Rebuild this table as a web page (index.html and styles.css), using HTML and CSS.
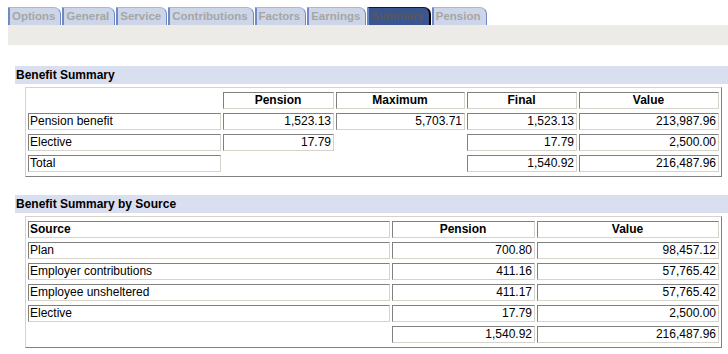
FILE: index.html
```html
<!DOCTYPE html>
<html>
<head>
<meta charset="utf-8">
<link rel="stylesheet" href="styles.css">
</head>
<body>
<div class="tabs">
  <div class="tab">Options</div>
  <div class="tab">General</div>
  <div class="tab">Service</div>
  <div class="tab">Contributions</div>
  <div class="tab">Factors</div>
  <div class="tab">Earnings</div>
  <div class="tab active">Summary</div>
  <div class="tab">Pension</div>
</div>
<div class="band"></div>

<div class="section-title first">Benefit Summary</div>
<table class="grid t1">
  <colgroup>
    <col class="c-label"><col class="c-pension"><col class="c-max"><col class="c-final"><col class="c-value">
  </colgroup>
  <tr>
    <td class="empty"></td>
    <th>Pension</th>
    <th>Maximum</th>
    <th>Final</th>
    <th>Value</th>
  </tr>
  <tr>
    <td>Pension benefit</td>
    <td class="num">1,523.13</td>
    <td class="num">5,703.71</td>
    <td class="num">1,523.13</td>
    <td class="num">213,987.96</td>
  </tr>
  <tr>
    <td>Elective</td>
    <td class="num">17.79</td>
    <td class="empty"></td>
    <td class="num">17.79</td>
    <td class="num">2,500.00</td>
  </tr>
  <tr>
    <td>Total</td>
    <td class="empty"></td>
    <td class="empty"></td>
    <td class="num">1,540.92</td>
    <td class="num">216,487.96</td>
  </tr>
</table>

<div class="section-title second">Benefit Summary by Source</div>
<table class="grid t2">
  <colgroup>
    <col class="c-source"><col class="c-spension"><col class="c-svalue">
  </colgroup>
  <tr>
    <th class="left">Source</th>
    <th>Pension</th>
    <th>Value</th>
  </tr>
  <tr>
    <td>Plan</td>
    <td class="num">700.80</td>
    <td class="num">98,457.12</td>
  </tr>
  <tr>
    <td>Employer contributions</td>
    <td class="num">411.16</td>
    <td class="num">57,765.42</td>
  </tr>
  <tr>
    <td>Employee unsheltered</td>
    <td class="num">411.17</td>
    <td class="num">57,765.42</td>
  </tr>
  <tr>
    <td>Elective</td>
    <td class="num">17.79</td>
    <td class="num">2,500.00</td>
  </tr>
  <tr>
    <td class="empty"></td>
    <td class="num">1,540.92</td>
    <td class="num">216,487.96</td>
  </tr>
</table>
</body>
</html>
```

FILE: styles.css
```css
html, body {
  background: #ffffff;
}
body {
  margin: 7px 0 0 8px;
  font-family: "Liberation Sans", Arial, sans-serif;
  font-size: 12px;
  color: #000;
}
.tabs {
  display: flex;
  gap: 1px;
  height: 18px;
  align-items: stretch;
}
.tab {
  box-sizing: border-box;
  height: 18px;
  padding: 0 5px 0 2px;
  background: #cdd5e8;
  border-top: 1px solid #a8b6dc;
  border-left: 2px solid #7088c3;
  border-right: 1px solid #7088c3;
  border-top-right-radius: 7px;
  color: #a6a6a6;
  font-weight: bold;
  font-size: 11.5px;
  line-height: 17px;
  white-space: nowrap;
}
.tab.active {
  background: #3b5590;
  border-top: 1px solid #1a1a1a;
  border-right: 2px solid #000;
  border-left: 2px solid #6c84bf;
  color: #585858;
}
.band {
  height: 20px;
  background: #ecebe7;
}
.section-title {
  margin-left: 7px;
  height: 18px;
  line-height: 18px;
  padding-left: 1px;
  background: #d9dfee;
  font-weight: bold;
  font-size: 12px;
}
.section-title.first {
  margin-top: 21px;
}
.section-title.second {
  margin-top: 18px;
}
.grid {
  margin: 3px 0 0 17px;
  table-layout: fixed;
  border-collapse: separate;
  border-spacing: 2px 4px;
  border-style: solid;
  border-width: 1px;
  border-color: #d6d3cb #808080 #808080 #d6d3cb;
  empty-cells: hide;
}
.t1 { width: 697px; }
.t2 { width: 697px; }
.c-label { width: 193px; }
.c-pension { width: 111px; }
.c-max { width: 129px; }
.c-final { width: 110px; }
.c-value { width: 140px; }
.c-source { width: 362px; }
.c-spension { width: 143px; }
.c-svalue { width: 182px; }
.grid td, .grid th {
  box-sizing: border-box;
  height: 17px;
  padding: 0 2px 0 1px;
  border-style: solid;
  border-width: 1px;
  border-color: #808080 #d6d3cb #d6d3cb #808080;
  font-size: 12px;
  line-height: 15px;
  white-space: nowrap;
  overflow: hidden;
  vertical-align: middle;
}
.grid th {
  font-weight: bold;
  text-align: center;
}
.grid th.left {
  text-align: left;
}
.grid td {
  text-align: left;
}
.grid td.num {
  text-align: right;
}
.grid td.empty {
  border: none;
}
```
